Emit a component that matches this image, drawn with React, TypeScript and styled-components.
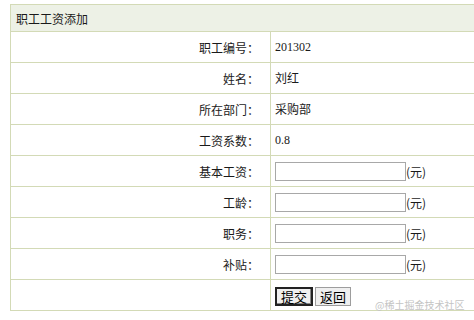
import React from 'react';
import styled, { createGlobalStyle } from 'styled-components';

const GlobalStyle = createGlobalStyle`
  body {
    margin: 0;
    background: #ffffff;
    font-family: "Liberation Serif", "Noto Sans CJK SC", serif;
  }
`;

const Page = styled.div`
  position: relative;
  width: 474px;
  height: 320px;
  overflow: hidden;
  padding: 4px 0 0 10px;
  box-sizing: border-box;
`;

const Grid = styled.table`
  border-collapse: collapse;
  width: 480px;
  font-size: 12px;
  color: #1a1a1a;
`;

const HeadCell = styled.td`
  height: 26px;
  padding: 0 0 0 5px;
  background: #edf1e6;
  border: 1px solid #d3dab6;
  text-align: left;
  font-size: 12px;
  font-family: "Noto Sans CJK SC", sans-serif;
`;

const Label = styled.td`
  width: 248px;
  height: 30px;
  padding: 0 11px 0 0;
  border: 1px solid #d3dab6;
  text-align: right;
  font-family: "Noto Sans CJK SC", sans-serif;
`;

const Value = styled.td`
  height: 30px;
  padding: 0 0 0 4px;
  border: 1px solid #d3dab6;
  text-align: left;
`;

const Cn = styled.span`
  font-family: "Noto Sans CJK SC", sans-serif;
`;

const Field = styled.input`
  width: 127px;
  height: 15px;
  margin: 0;
  padding: 1px;
  border: 1px solid #a8a8a8;
  vertical-align: middle;
  font-size: 12px;
`;

const Unit = styled.span`
  font-family: "Noto Sans CJK SC", sans-serif;
  font-size: 12px;
  vertical-align: middle;
`;

const Actions = styled.div`
  display: flex;
  gap: 2px;
  padding-top: 2px;
`;

const Btn = styled.button<{ $primary?: boolean }>`
  height: 19px;
  padding: 0 4px;
  margin: 0;
  font-family: "Noto Sans CJK SC", sans-serif;
  font-size: 13px;
  line-height: 15px;
  color: #000;
  background: #efefef;
  border: ${p => (p.$primary ? '2px solid #222' : '1px solid #9d9d9d')};
  box-shadow: ${p => (p.$primary ? 'inset -1px -1px 0 #888' : 'none')};
`;

const Watermark = styled.div`
  position: absolute;
  left: 375px;
  top: 297px;
  white-space: nowrap;
  font-family: "Noto Sans CJK SC", sans-serif;
  font-size: 10px;
  color: #c4c4c4;
`;

const info = [
  { label: '职工编号：', value: '201302', cn: false },
  { label: '姓名：', value: '刘红', cn: true },
  { label: '所在部门：', value: '采购部', cn: true },
  { label: '工资系数：', value: '0.8', cn: false },
];

const inputs = ['基本工资：', '工龄：', '职务：', '补贴：'];

export default function App() {
  return (
    <Page>
      <GlobalStyle />
      <Grid>
        <tbody>
          <tr>
            <HeadCell colSpan={2}>职工工资添加</HeadCell>
          </tr>
          {info.map(r => (
            <tr key={r.label}>
              <Label>{r.label}</Label>
              <Value>{r.cn ? <Cn>{r.value}</Cn> : r.value}</Value>
            </tr>
          ))}
          {inputs.map(l => (
            <tr key={l}>
              <Label>{l}</Label>
              <Value>
                <Field type="text" />
                <Unit>(元)</Unit>
              </Value>
            </tr>
          ))}
          <tr>
            <Label></Label>
            <Value>
              <Actions>
                <Btn $primary>提交</Btn>
                <Btn>返回</Btn>
              </Actions>
            </Value>
          </tr>
        </tbody>
      </Grid>
      <Watermark>@稀土掘金技术社区</Watermark>
    </Page>
  );
}
